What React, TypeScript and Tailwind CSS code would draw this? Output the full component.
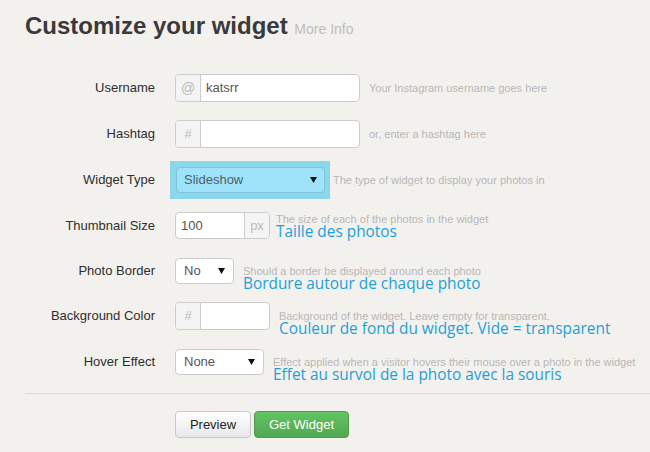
import type { ReactNode } from "react";

type FieldRow = {
  label: string;
  height: string;
  control: ReactNode;
  help: string;
  helpGap: string;
  note?: string;
  noteBelow?: boolean;
};

const Caret = () => (
  <svg width="7" height="6" viewBox="0 0 7 6" className="shrink-0">
    <path d="M0 0h7L3.5 6z" fill="#111" />
  </svg>
);

const Addon = ({ children, width }: { children: ReactNode; width: string }) => (
  <span
    className={`flex h-full ${width} items-center justify-center bg-[#f4f4f4] text-[14px] text-[#bbb]`}
  >
    {children}
  </span>
);

const Select = ({ value, width }: { value: string; width: string }) => (
  <div
    className={`flex h-[26px] ${width} items-center justify-between rounded-[4px] border border-[#ccc] bg-white pl-[8px] pr-[8px] text-[13px] text-[#555]`}
  >
    <span>{value}</span>
    <Caret />
  </div>
);

const rows: FieldRow[] = [
  {
    label: "Username",
    height: "h-[46px]",
    helpGap: "ml-[9px]",
    help: "Your Instagram username goes here",
    control: (
      <div className="flex h-[28px] w-[185px] overflow-hidden rounded-[4px] border border-[#ccc] bg-white">
        <Addon width="w-[25px] border-r border-[#ccc]">@</Addon>
        <span className="flex items-center pl-[5px] text-[13px] text-[#555]">katsrr</span>
      </div>
    ),
  },
  {
    label: "Hashtag",
    height: "h-[46px]",
    helpGap: "ml-[9px]",
    help: "or, enter a hashtag here",
    control: (
      <div className="flex h-[28px] w-[185px] overflow-hidden rounded-[4px] border border-[#ccc] bg-white">
        <Addon width="w-[25px] border-r border-[#ccc]">
          <span className="text-[13px]">#</span>
        </Addon>
      </div>
    ),
  },
  {
    label: "Widget Type",
    height: "h-[46px]",
    helpGap: "ml-[3px]",
    help: "The type of widget to display your photos in",
    control: (
      <div className="-ml-[5px] flex bg-[#8dd7eb] py-[6px] pl-[6px] pr-[5px]">
        <div className="flex h-[26px] w-[149px] items-center justify-between rounded-[4px] border border-[#7ec4d8] bg-[#9ee3fa] pl-[7px] pr-[7px] text-[13px] text-[#4d5f66]">
          <span>Slideshow</span>
          <Caret />
        </div>
      </div>
    ),
  },
  {
    label: "Thumbnail Size",
    height: "h-[45px]",
    helpGap: "ml-[6px]",
    help: "The size of each of the photos in the widget",
    note: "Taille des photos",
    control: (
      <div className="flex h-[27px] w-[95px] overflow-hidden rounded-[4px] border border-[#ccc] bg-white">
        <span className="flex w-[69px] items-center border-r border-[#ccc] pl-[5px] text-[13px] text-[#555]">
          100
        </span>
        <Addon width="flex-1">
          <span className="text-[13px]">px</span>
        </Addon>
      </div>
    ),
  },
  {
    label: "Photo Border",
    height: "h-[45px]",
    helpGap: "ml-[9px]",
    help: "Should a border be displayed around each photo",
    note: "Bordure autour de chaque photo",
    noteBelow: true,
    control: <Select value="No" width="w-[59px]" />,
  },
  {
    label: "Background Color",
    height: "h-[46px]",
    helpGap: "ml-[9px]",
    help: "Background of the widget. Leave empty for transparent.",
    note: "Couleur de fond du widget. Vide = transparent",
    noteBelow: true,
    control: (
      <div className="flex h-[28px] w-[95px] overflow-hidden rounded-[4px] border border-[#ccc] bg-white">
        <Addon width="w-[25px] border-r border-[#ccc]">
          <span className="text-[13px]">#</span>
        </Addon>
      </div>
    ),
  },
  {
    label: "Hover Effect",
    height: "h-[45px]",
    helpGap: "ml-[9px]",
    help: "Effect applied when a visitor hovers their mouse over a photo in the widget",
    note: "Effet au survol de la photo avec la souris",
    noteBelow: true,
    control: <Select value="None" width="w-[89px]" />,
  },
];

export default function App() {
  return (
    <div className="h-[452px] w-[650px] overflow-hidden bg-[#f3f1ed] font-['Liberation_Sans',Arial,sans-serif]">
      <div className="h-[65px] pl-[25px] pt-[12px]">
        <h1 className="text-[24px] font-bold leading-[28px] text-[#3a3a3a]">
          Customize your widget{" "}
          <span className="text-[14px] font-normal text-[#bdbdbd]">More Info</span>
        </h1>
      </div>

      <form>
        {rows.map((row) => (
          <div key={row.label} className={`flex ${row.height} items-center`}>
            <label className="w-[155px] shrink-0 text-right text-[13px] text-[#2e2e2e]">
              {row.label}
            </label>
            <div className="ml-[20px] flex items-center">
              {row.control}
              <div
                className={`${row.helpGap} flex flex-col whitespace-nowrap ${row.noteBelow ? "pt-[14px]" : ""}`}
              >
                <span className="text-[11px] leading-[12px] text-[#b8b8b8]">{row.help}</span>
                {row.note && (
                  <span className="font-['Open_Sans',sans-serif] text-[15.4px] leading-[14px] text-[#1d9fdc]">
                    {row.note}
                  </span>
                )}
              </div>
            </div>
          </div>
        ))}

        <div className="ml-[25px] mt-[9px] border-t border-[#dcdcda]" />

        <div className="ml-[175px] mt-[17px] flex gap-[3px]">
          <button
            type="button"
            className="h-[27px] w-[76px] rounded-[4px] border border-[#c8c8c8] bg-gradient-to-b from-white to-[#e8e8e8] text-[13px] text-[#222] shadow-[inset_0_1px_0_rgba(255,255,255,0.6)]"
          >
            Preview
          </button>
          <button
            type="button"
            className="h-[27px] w-[95px] rounded-[4px] border border-[#4c9c4c] bg-gradient-to-b from-[#62c462] to-[#51a851] text-[13px] text-white"
          >
            Get Widget
          </button>
        </div>
      </form>
    </div>
  );
}
